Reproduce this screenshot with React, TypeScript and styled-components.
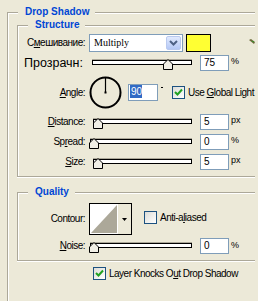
import React from 'react';
import styled, { createGlobalStyle } from 'styled-components';

const UI_FONT = '"Liberation Sans", Arial, sans-serif';
const LINE = '#aca899';

const GlobalStyle = createGlobalStyle`
  html, body {
    margin: 0;
    padding: 0;
    background: #ece9d8;
  }
  body {
    font-family: ${UI_FONT};
    color: #000;
  }
`;

const Panel = styled.div`
  width: 258px;
  height: 301px;
  box-sizing: border-box;
  padding: 6px 3px 0 7px;
  background: #ece9d8;
`;

const Group = styled.section<{ $mt?: number }>`
  margin-top: ${p => p.$mt ?? 0}px;
`;

const GroupHead = styled.div`
  display: flex;
  height: 12px;
`;

const Lead = styled.div`
  flex: none;
  box-sizing: border-box;
  width: 11px;
  margin-top: 6px;
  border-top: 1px solid ${LINE};
  border-left: 1px solid ${LINE};
  box-shadow: inset 1px 1px 0 #fff;
`;

const Title = styled.span`
  flex: none;
  padding: 0 6px 0 7px;
  font: bold 10px/12px "Liberation Sans", Arial, sans-serif;
  color: #0046d5;
`;

const Tail = styled.div`
  flex: 1;
  align-self: flex-start;
  margin-top: 6px;
  border-top: 1px solid ${LINE};
  box-shadow: 0 1px 0 #fff;
`;

const GroupBody = styled.div<{ $pad: string; $open?: boolean }>`
  padding: ${p => p.$pad};
  border-left: 1px solid ${LINE};
  border-bottom: ${p => (p.$open ? 'none' : `1px solid ${LINE}`)};
  box-shadow: ${p => (p.$open ? 'inset 1px 0 0 #fff' : 'inset 1px 0 0 #fff, 0 1px 0 #fff')};
`;

const Row = styled.div<{ $h: number }>`
  display: flex;
  align-items: center;
  height: ${p => p.$h}px;
`;

const Label = styled.span<{ $big?: boolean }>`
  flex: none;
  width: 67px;
  box-sizing: border-box;
  margin-right: 4px;
  padding-right: ${p => (p.$big ? 2 : 0)}px;
  text-align: right;
  white-space: nowrap;
  font-size: ${p => (p.$big ? 12.5 : 10)}px;
  letter-spacing: ${p => (p.$big ? 0 : -0.5)}px;
  line-height: 14px;
`;

const Select = styled.div`
  flex: none;
  display: flex;
  align-items: center;
  justify-content: space-between;
  box-sizing: border-box;
  width: 94px;
  height: 18px;
  padding: 1px 1px 1px 4px;
  border: 1px solid #7f9db9;
  background: #fff;
  font: 10px/14px "Liberation Serif", "Times New Roman", serif;
`;

const DropButton = styled.span`
  display: flex;
  align-items: center;
  justify-content: center;
  box-sizing: border-box;
  width: 15px;
  height: 14px;
  border: 1px solid #b9c9ef;
  border-radius: 2px;
  background: linear-gradient(#e1eafe, #b4c8f6);
`;

const Swatch = styled.div<{ $color: string }>`
  flex: none;
  box-sizing: border-box;
  width: 25px;
  height: 18px;
  margin-left: 3px;
  border: 1px solid #000;
  background: ${p => p.$color};
`;

const Picker = styled.svg`
  flex: none;
  margin: 0 0 4px 38px;
`;

const Slider = styled.div`
  position: relative;
  flex: none;
  width: 103px;
  height: 16px;
`;

const Track = styled.div<{ $inset: number }>`
  box-sizing: border-box;
  height: 5px;
  margin: 5px 0 0 ${p => p.$inset}px;
  border: 1px solid #000;
  background: #fff;
  box-shadow: 0 -1px 0 ${LINE};
`;

const Thumb = styled.svg<{ $x: number }>`
  position: absolute;
  top: 4px;
  left: ${p => p.$x}px;
`;

const Field = styled.div<{ $w?: number; $h?: number; $ml?: number }>`
  flex: none;
  box-sizing: border-box;
  width: ${p => p.$w ?? 29}px;
  height: ${p => p.$h ?? 16}px;
  margin-left: ${p => p.$ml ?? 8}px;
  padding-left: 3px;
  border: 1px solid #7f9db9;
  background: #fff;
  font: 10px/14px "Liberation Sans", Arial, sans-serif;
`;

const Selected = styled.span`
  display: inline-block;
  margin-left: -2px;
  padding: 0 0 0 1px;
  line-height: 13px;
  background: #316ac5;
  color: #fff;
`;

const Unit = styled.span`
  align-self: flex-start;
  margin: 3px 0 0 2px;
  font: 9px/10px "Liberation Sans", Arial, sans-serif;
`;

const Degree = styled.span`
  align-self: flex-start;
  width: 2px;
  height: 1px;
  margin: 14px 0 0 3px;
  background: #000;
`;

const DialSvg = styled.svg`
  flex: none;
`;

const CheckRow = styled.label<{ $ml?: number; $mt?: number }>`
  display: flex;
  align-items: center;
  align-self: ${p => (p.$mt !== undefined ? 'flex-start' : 'center')};
  margin: ${p => p.$mt ?? 0}px 0 0 ${p => p.$ml ?? 0}px;
  font-size: 10px;
  letter-spacing: -0.5px;
  line-height: 13px;
  white-space: nowrap;
`;

const Box = styled.span`
  display: flex;
  align-items: center;
  justify-content: center;
  flex: none;
  box-sizing: border-box;
  width: 13px;
  height: 13px;
  margin-right: 3px;
  border: 1px solid #1c5180;
  background: linear-gradient(135deg, #dcdcd7, #fff);
`;

const ContourBox = styled.div`
  flex: none;
  display: flex;
  box-sizing: border-box;
  width: 43px;
  height: 32px;
  border: 1px solid #000;
  box-shadow: inset 1px 1px 0 #808080;
  background: #fff;
`;

const ContourArrow = styled.span`
  flex: 1;
  display: flex;
  align-items: center;
  justify-content: center;
  background: #ece9d8;
`;

const Knock = styled.div`
  margin: 6px 0 0 76px;
  display: flex;
`;

const GroupBox = ({
  title,
  pad,
  open,
  mt,
  children,
}: {
  title: string;
  pad: string;
  open?: boolean;
  mt?: number;
  children: React.ReactNode;
}) => (
  <Group $mt={mt}>
    <GroupHead>
      <Lead />
      <Title>{title}</Title>
      <Tail />
    </GroupHead>
    <GroupBody $pad={pad} $open={open}>
      {children}
    </GroupBody>
  </Group>
);

const Range = ({ inset, x }: { inset: number; x: number }) => (
  <Slider>
    <Track $inset={inset} />
    <Thumb $x={x} width="10" height="11" viewBox="0 0 10 11">
      <path d="M5 0.5 L9.5 5 V10.5 H0.5 V5 Z" fill="#f1efe6" stroke="#000" strokeWidth="1" />
    </Thumb>
  </Slider>
);

const Check = ({ on }: { on?: boolean }) => (
  <Box>
    {on && (
      <svg width="9" height="9" viewBox="0 0 9 9">
        <polyline points="1,4 3.5,6.5 8,1.5" fill="none" stroke="#21a121" strokeWidth="2" />
      </svg>
    )}
  </Box>
);

export default function App() {
  return (
    <Panel>
      <GlobalStyle />
      <GroupBox title="Drop Shadow" pad="1px 0 21px 9px" open>
        <GroupBox title="Structure" pad="2px 0 4px 0">
          <Row $h={20}>
            <Label>С<u>м</u>ешивание:</Label>
            <Select>
              <span>Multiply</span>
              <DropButton>
                <svg width="9" height="6" viewBox="0 0 9 6">
                  <polyline points="1,1 4.5,4.5 8,1" fill="none" stroke="#4d6185" strokeWidth="2" />
                </svg>
              </DropButton>
            </Select>
            <Swatch $color="#ffff33" />
            <Picker width="6" height="5" viewBox="0 0 6 5">
              <path d="M0 1 L2 0 L6 3 L5 5 Z" fill="#6b6a3a" />
              <rect x="3" y="2" width="2" height="1" fill="#3c8f2e" />
            </Picker>
          </Row>

          <Row $h={20}>
            <Label $big>Прозрачн:</Label>
            <Range inset={3} x={74} />
            <Field>75</Field>
            <Unit>%</Unit>
          </Row>

          <Row $h={39}>
            <Label><u>A</u>ngle:</Label>
            <DialSvg width="33" height="33" viewBox="0 0 33 33">
              <circle cx="16.5" cy="16.5" r="15" fill="none" stroke="#000" strokeWidth="2" />
              <line x1="16.5" y1="16.5" x2="16.5" y2="2" stroke="#000" strokeWidth="1.2" />
              <rect x="15.5" y="15.5" width="2" height="2" fill="#000" />
            </DialSvg>
            <Field $w={30} $h={17} $ml={6}>
              <Selected>90</Selected>
            </Field>
            <Degree />
            <CheckRow $ml={9}>
              <Check on />
              <span>Use <u>G</u>lobal Light</span>
            </CheckRow>
          </Row>

          <Row $h={20}>
            <Label><u>D</u>istance:</Label>
            <Range inset={4} x={4} />
            <Field>5</Field>
            <Unit>px</Unit>
          </Row>

          <Row $h={20}>
            <Label>Sp<u>r</u>ead:</Label>
            <Range inset={1} x={0} />
            <Field>0</Field>
            <Unit>%</Unit>
          </Row>

          <Row $h={20}>
            <Label><u>S</u>ize:</Label>
            <Range inset={4} x={4} />
            <Field>5</Field>
            <Unit>px</Unit>
          </Row>
        </GroupBox>

        <GroupBox title="Quality" pad="3px 0 5px 0" mt={9}>
          <Row $h={36}>
            <Label>Contour:</Label>
            <ContourBox>
              <svg width="28" height="30" viewBox="0 0 28 30">
                <rect x="0" y="0" width="28" height="30" fill="#fff" />
                <polygon points="1,29 27,1 27,29" fill="#aca899" />
              </svg>
              <ContourArrow>
                <svg width="5" height="3" viewBox="0 0 5 3">
                  <polygon points="0,0 5,0 2.5,3" fill="#000" />
                </svg>
              </ContourArrow>
            </ContourBox>
            <CheckRow $ml={12} $mt={10}>
              <Check />
              <span>Anti-a<u>l</u>iased</span>
            </CheckRow>
          </Row>

          <Row $h={18}>
            <Label><u>N</u>oise:</Label>
            <Range inset={1} x={0} />
            <Field>0</Field>
            <Unit>%</Unit>
          </Row>
        </GroupBox>

        <Knock>
          <CheckRow>
            <Check on />
            <span>Layer Knocks O<u>u</u>t Drop Shadow</span>
          </CheckRow>
        </Knock>
      </GroupBox>
    </Panel>
  );
}
